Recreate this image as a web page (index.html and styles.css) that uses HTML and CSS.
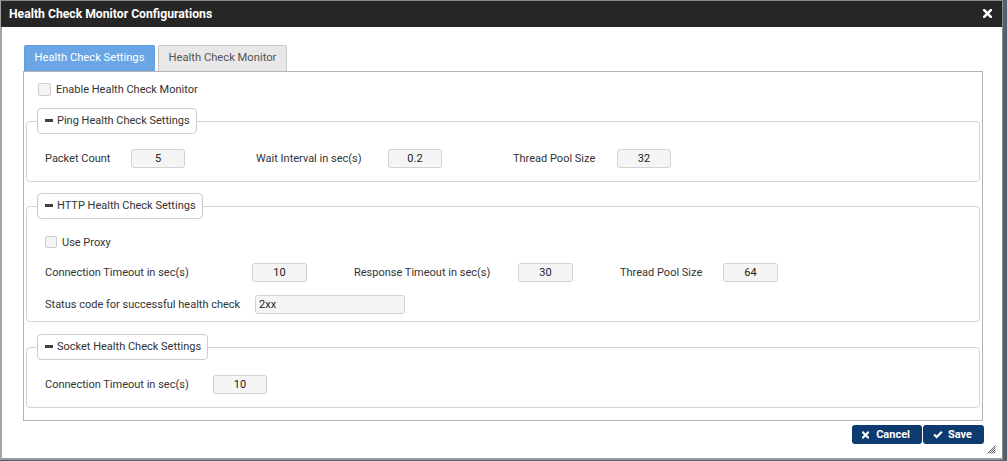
FILE: index.html
```html
<!DOCTYPE html>
<html>
<head>
<meta charset="utf-8">
<link rel="stylesheet" href="styles.css">
</head>
<body>
<div class="dialog">
  <div class="titlebar">
    <span class="title">Health Check Monitor Configurations</span>
    <span class="close"><svg width="9" height="9" viewBox="0 0 9 9"><path d="M1.2 1.2 L7.8 7.8 M7.8 1.2 L1.2 7.8" stroke="#fff" stroke-width="2.6" stroke-linecap="square"/></svg></span>
  </div>
  <div class="content">
    <div class="tabs">
      <div class="tab active">Health Check Settings</div>
      <div class="tab">Health Check Monitor</div>
    </div>
    <div class="panel">
      <div class="check-row top-check"><span class="cb"></span><span>Enable Health Check Monitor</span></div>

      <fieldset class="group ping">
        <legend><span class="minus"></span>Ping Health Check Settings</legend>
        <div class="row row-ping">
          <div class="field"><span class="lbl w86">Packet Count</span><span class="inp">5</span></div>
          <div class="field"><span class="lbl w132">Wait Interval in sec(s)</span><span class="inp">0.2</span></div>
          <div class="field"><span class="lbl w104">Thread Pool Size</span><span class="inp">32</span></div>
        </div>
      </fieldset>

      <fieldset class="group http">
        <legend><span class="minus"></span>HTTP Health Check Settings</legend>
        <div class="check-row proxy-check"><span class="cb small"></span><span>Use Proxy</span></div>
        <div class="row row-http">
          <div class="field"><span class="lbl w207">Connection Timeout in sec(s)</span><span class="inp w55">10</span></div>
          <div class="field"><span class="lbl w164">Response Timeout in sec(s)</span><span class="inp w55">30</span></div>
          <div class="field"><span class="lbl w103">Thread Pool Size</span><span class="inp w55">64</span></div>
        </div>
        <div class="row row-status">
          <div class="field"><span class="lbl w210">Status code for successful health check</span><span class="inp text">2xx</span></div>
        </div>
      </fieldset>

      <fieldset class="group socket">
        <legend><span class="minus"></span>Socket Health Check Settings</legend>
        <div class="row row-socket">
          <div class="field"><span class="lbl w168">Connection Timeout in sec(s)</span><span class="inp">10</span></div>
        </div>
      </fieldset>
    </div>
    <div class="actions">
      <button class="btn cancel"><svg width="8" height="8" viewBox="0 0 8 8"><path d="M1.2 1.2 L6.8 6.8 M6.8 1.2 L1.2 6.8" stroke="#fff" stroke-width="2.4" stroke-linecap="square"/></svg><span>Cancel</span></button>
      <button class="btn save"><svg width="11" height="9" viewBox="0 0 11 9"><path d="M1.2 4.6 L4 7.3 L9.8 1.5" stroke="#fff" stroke-width="2.4" fill="none"/></svg><span>Save</span></button>
    </div>
  </div>
  <svg class="grip" width="9" height="9" viewBox="0 0 9 9"><path d="M8.5 0.5 L0.5 8.5 M8.5 2.5 L2.5 8.5 M8.5 4.5 L4.5 8.5 M8.5 6.5 L6.5 8.5" stroke="#555" stroke-width="1"/></svg>
</div>
</body>
</html>
```

FILE: styles.css
```css
html, body {
  margin: 0;
  padding: 0;
}
body {
  width: 1007px;
  height: 461px;
  background: #56606c;
  font-family: Roboto, "Liberation Sans", Arial, sans-serif;
  font-size: 11px;
  color: #333;
  overflow: hidden;
}
.dialog {
  position: relative;
  width: 1003px;
  height: 460px;
  box-sizing: border-box;
  border: 1px solid #8a8a8a;
  border-left: 2px solid #a3a3a3;
  border-bottom: 2px solid #9a9a9a;
  background: #fff;
}
.titlebar {
  height: 26px;
  margin-left: -1px;
  background: #262626;
  display: flex;
  align-items: center;
  justify-content: space-between;
  padding: 0 10px 0 8px;
}
.title {
  color: #fff;
  font-weight: bold;
  font-size: 12.2px;
  font-family: Roboto, "Liberation Sans", Arial, sans-serif;
}
.close {
  display: flex;
  width: 9px;
  height: 9px;
  margin-top: -2px;
}
.content {
  padding: 18px 18px 0 21px;
}
.tabs {
  display: flex;
  gap: 3px;
  margin-left: 1px;
  height: 26px;
}
.tab {
  box-sizing: border-box;
  height: 26px;
  line-height: 24px;
  padding: 0;
  text-align: center;
  white-space: nowrap;
  border: 1px solid #c8c8c8;
  border-bottom: none;
  border-radius: 2px 2px 0 0;
  background: #e8e8e8;
  color: #555;
  font-size: 11.2px;
  width: 129px;
}
.tab.active {
  background: #6aa6e6;
  border-color: #63a0e0;
  color: #fff;
  width: 131px;
}
.panel {
  box-sizing: border-box;
  width: 960px;
  height: 350px;
  border: 1px solid #b4b4b4;
  padding: 0 2px;
}
.check-row {
  display: flex;
  align-items: center;
  height: 18px;
}
.top-check {
  margin: 8px 0 10px 12px;
}
.cb {
  box-sizing: border-box;
  width: 13px;
  height: 13px;
  border: 1px solid #cfcfcf;
  border-radius: 2px;
  background: #f3f3f3;
  margin-right: 5px;
}
.cb.small {
  width: 12px;
  height: 12px;
  margin-right: 5px;
}
.group {
  margin: 0 0 11px 0;
  border: 1px solid #d4d4d4;
  border-radius: 4px;
  padding: 0 0 13px 18px;
  min-width: 0;
}
.group.http {
  padding-bottom: 7px;
  margin-bottom: 12px;
}
legend {
  box-sizing: border-box;
  height: 26px;
  line-height: 24px;
  margin-left: -8px;
  padding: 0 6px 0 7px;
  border: 1px solid #cccccc;
  border-radius: 4px;
  background: #fff;
  font-size: 11px;
  color: #333;
}
.minus {
  display: inline-block;
  width: 8px;
  height: 3px;
  background: #444;
  vertical-align: middle;
  margin: -2px 4px 0 0;
}
.row {
  display: flex;
  align-items: center;
}
.row-ping { gap: 71px; margin-top: 15px; }
.row-http { gap: 47px; margin-top: 12px; }
.row-status { margin-top: 13px; }
.row-socket { margin-top: 15px; }
.proxy-check { margin-top: 14px; }
.field {
  display: flex;
  align-items: center;
}
.lbl { display: block; white-space: nowrap; }
.w86 { width: 86px; }
.w132 { width: 132px; }
.w104 { width: 104px; }
.w207 { width: 207px; }
.w164 { width: 164px; }
.w103 { width: 103px; }
.w210 { width: 210px; }
.w168 { width: 168px; }
.inp {
  box-sizing: border-box;
  display: flex;
  align-items: center;
  justify-content: center;
  width: 54px;
  height: 19px;
  border: 1px solid #d2d2d2;
  border-radius: 3px;
  background: #f5f5f5;
  color: #222;
  font-size: 11px;
}
.inp.w55 { width: 55px; }
.inp.text {
  width: 150px;
  justify-content: flex-start;
  padding-left: 3px;
}
.actions {
  display: flex;
  justify-content: flex-end;
  gap: 1px;
  width: 961px;
  margin-top: 4px;
}
.btn {
  display: flex;
  align-items: center;
  height: 19px;
  border: none;
  border-radius: 3px;
  background: #0d3b70;
  color: #fff;
  font-family: Roboto, "Liberation Sans", Arial, sans-serif;
  font-weight: bold;
  font-size: 11px;
  padding: 0 12px 0 10px;
  margin: 0;
}
.btn.cancel { width: 70px; }
.btn.save { width: 61px; }
.btn.cancel svg { margin-right: 7px; }
.btn.save svg { margin-right: 5px; }
.grip {
  position: absolute;
  right: 6px;
  bottom: 4px;
}
```
